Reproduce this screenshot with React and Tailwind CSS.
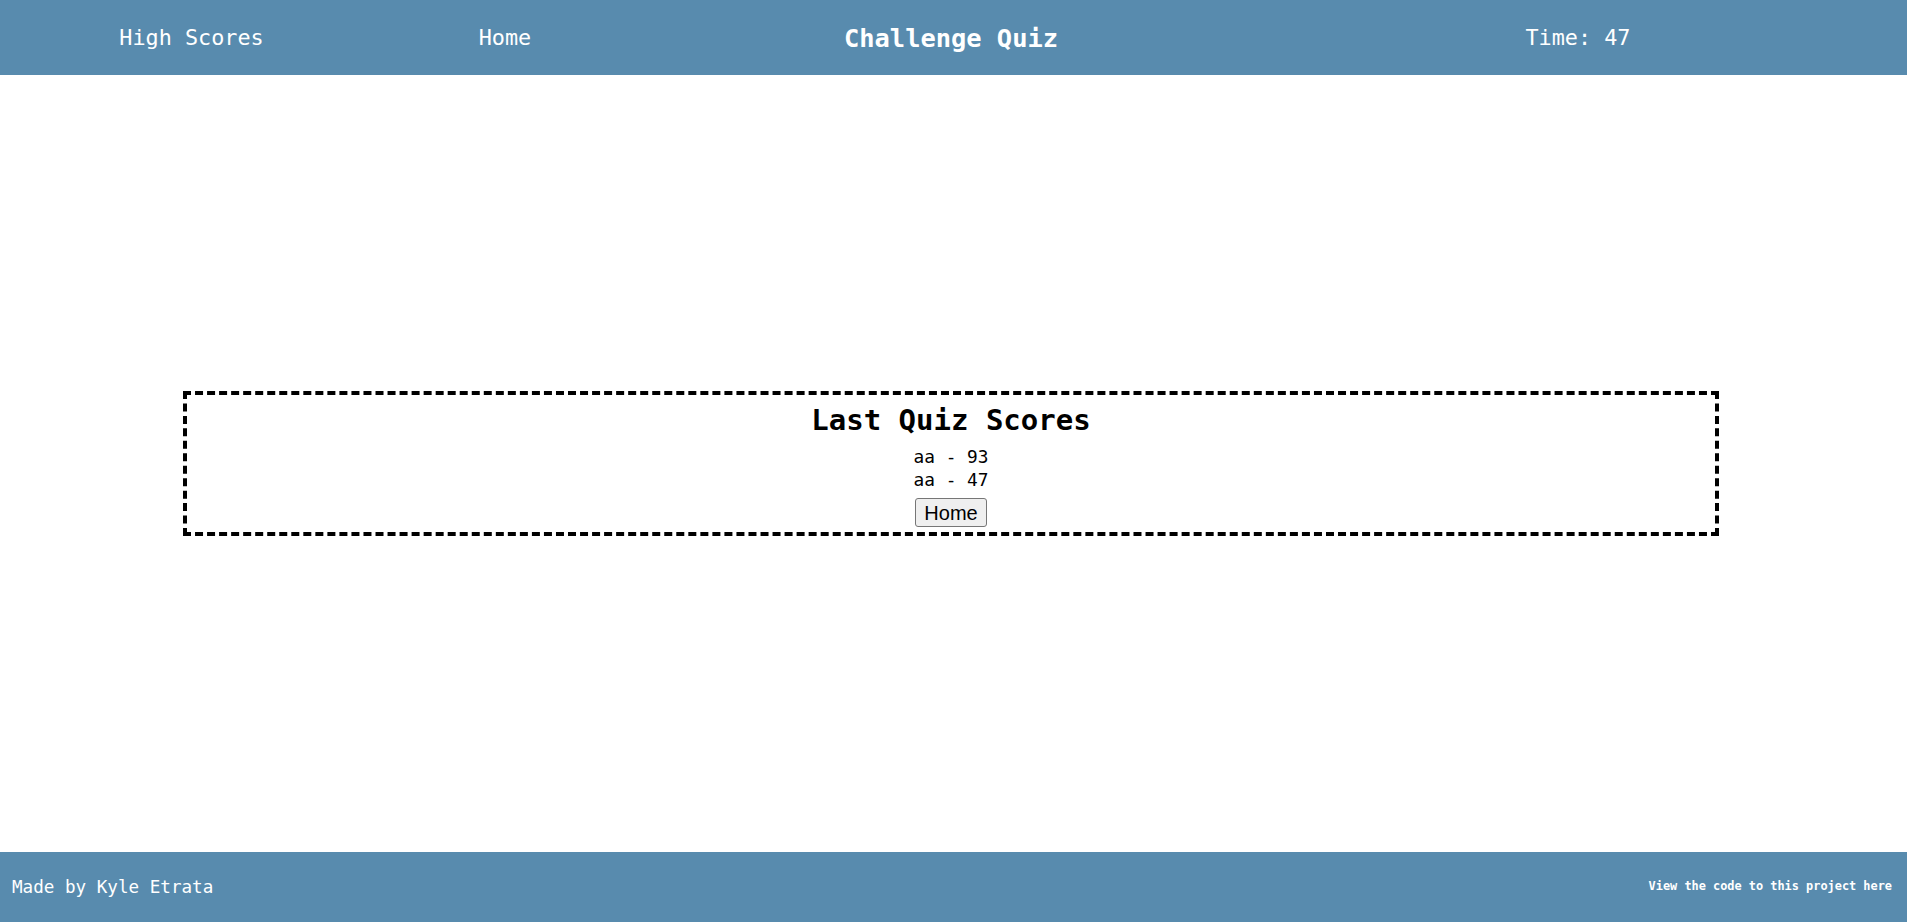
import React from 'react';

const mono = "font-['DejaVu_Sans_Mono','Liberation_Mono',monospace]";

export default function App() {
  const scores = [
    { name: 'aa', score: 93 },
    { name: 'aa', score: 47 },
  ];

  return (
    <div className={`flex h-[922px] flex-col bg-white ${mono}`}>
      <header className="flex h-[75px] shrink-0 items-center bg-[#588bae] pt-[2px] text-white">
        <a className="w-[383px] text-center text-[21.8px]">High Scores</a>
        <a className="w-[244px] text-center text-[21.8px]">Home</a>
        <h1 className="w-[648px] text-center text-[25.4px] font-bold">Challenge Quiz</h1>
        <div className="w-[606px] text-center text-[21.8px]">Time: 47</div>
      </header>

      <main className="flex flex-1 items-center justify-center pr-[5px]">
        <div className="flex w-[1536px] flex-col items-center border-4 border-dashed border-black pt-[7px] pb-[5px]">
          <h2 className="text-[29px] font-bold leading-[36px]">Last Quiz Scores</h2>
          <ul className="mt-[7px] text-center text-[17.8px] leading-[23px]">
            {scores.map((s, i) => (
              <li key={i}>
                {s.name} - {s.score}
              </li>
            ))}
          </ul>
          <button className="mt-[7px] h-[29px] rounded-[3px] border border-[#767676] bg-[#efefef] px-[8px] font-['Liberation_Sans',Arial,sans-serif] text-[20px] leading-none">
            Home
          </button>
        </div>
      </main>

      <footer className="flex h-[70px] shrink-0 items-center justify-between bg-[#588bae] px-[12px] pr-[15px] text-white">
        <span className="text-[17.6px]">Made by Kyle Etrata</span>
        <a className="text-[11.9px] font-bold">View the code to this project here</a>
      </footer>
    </div>
  );
}
